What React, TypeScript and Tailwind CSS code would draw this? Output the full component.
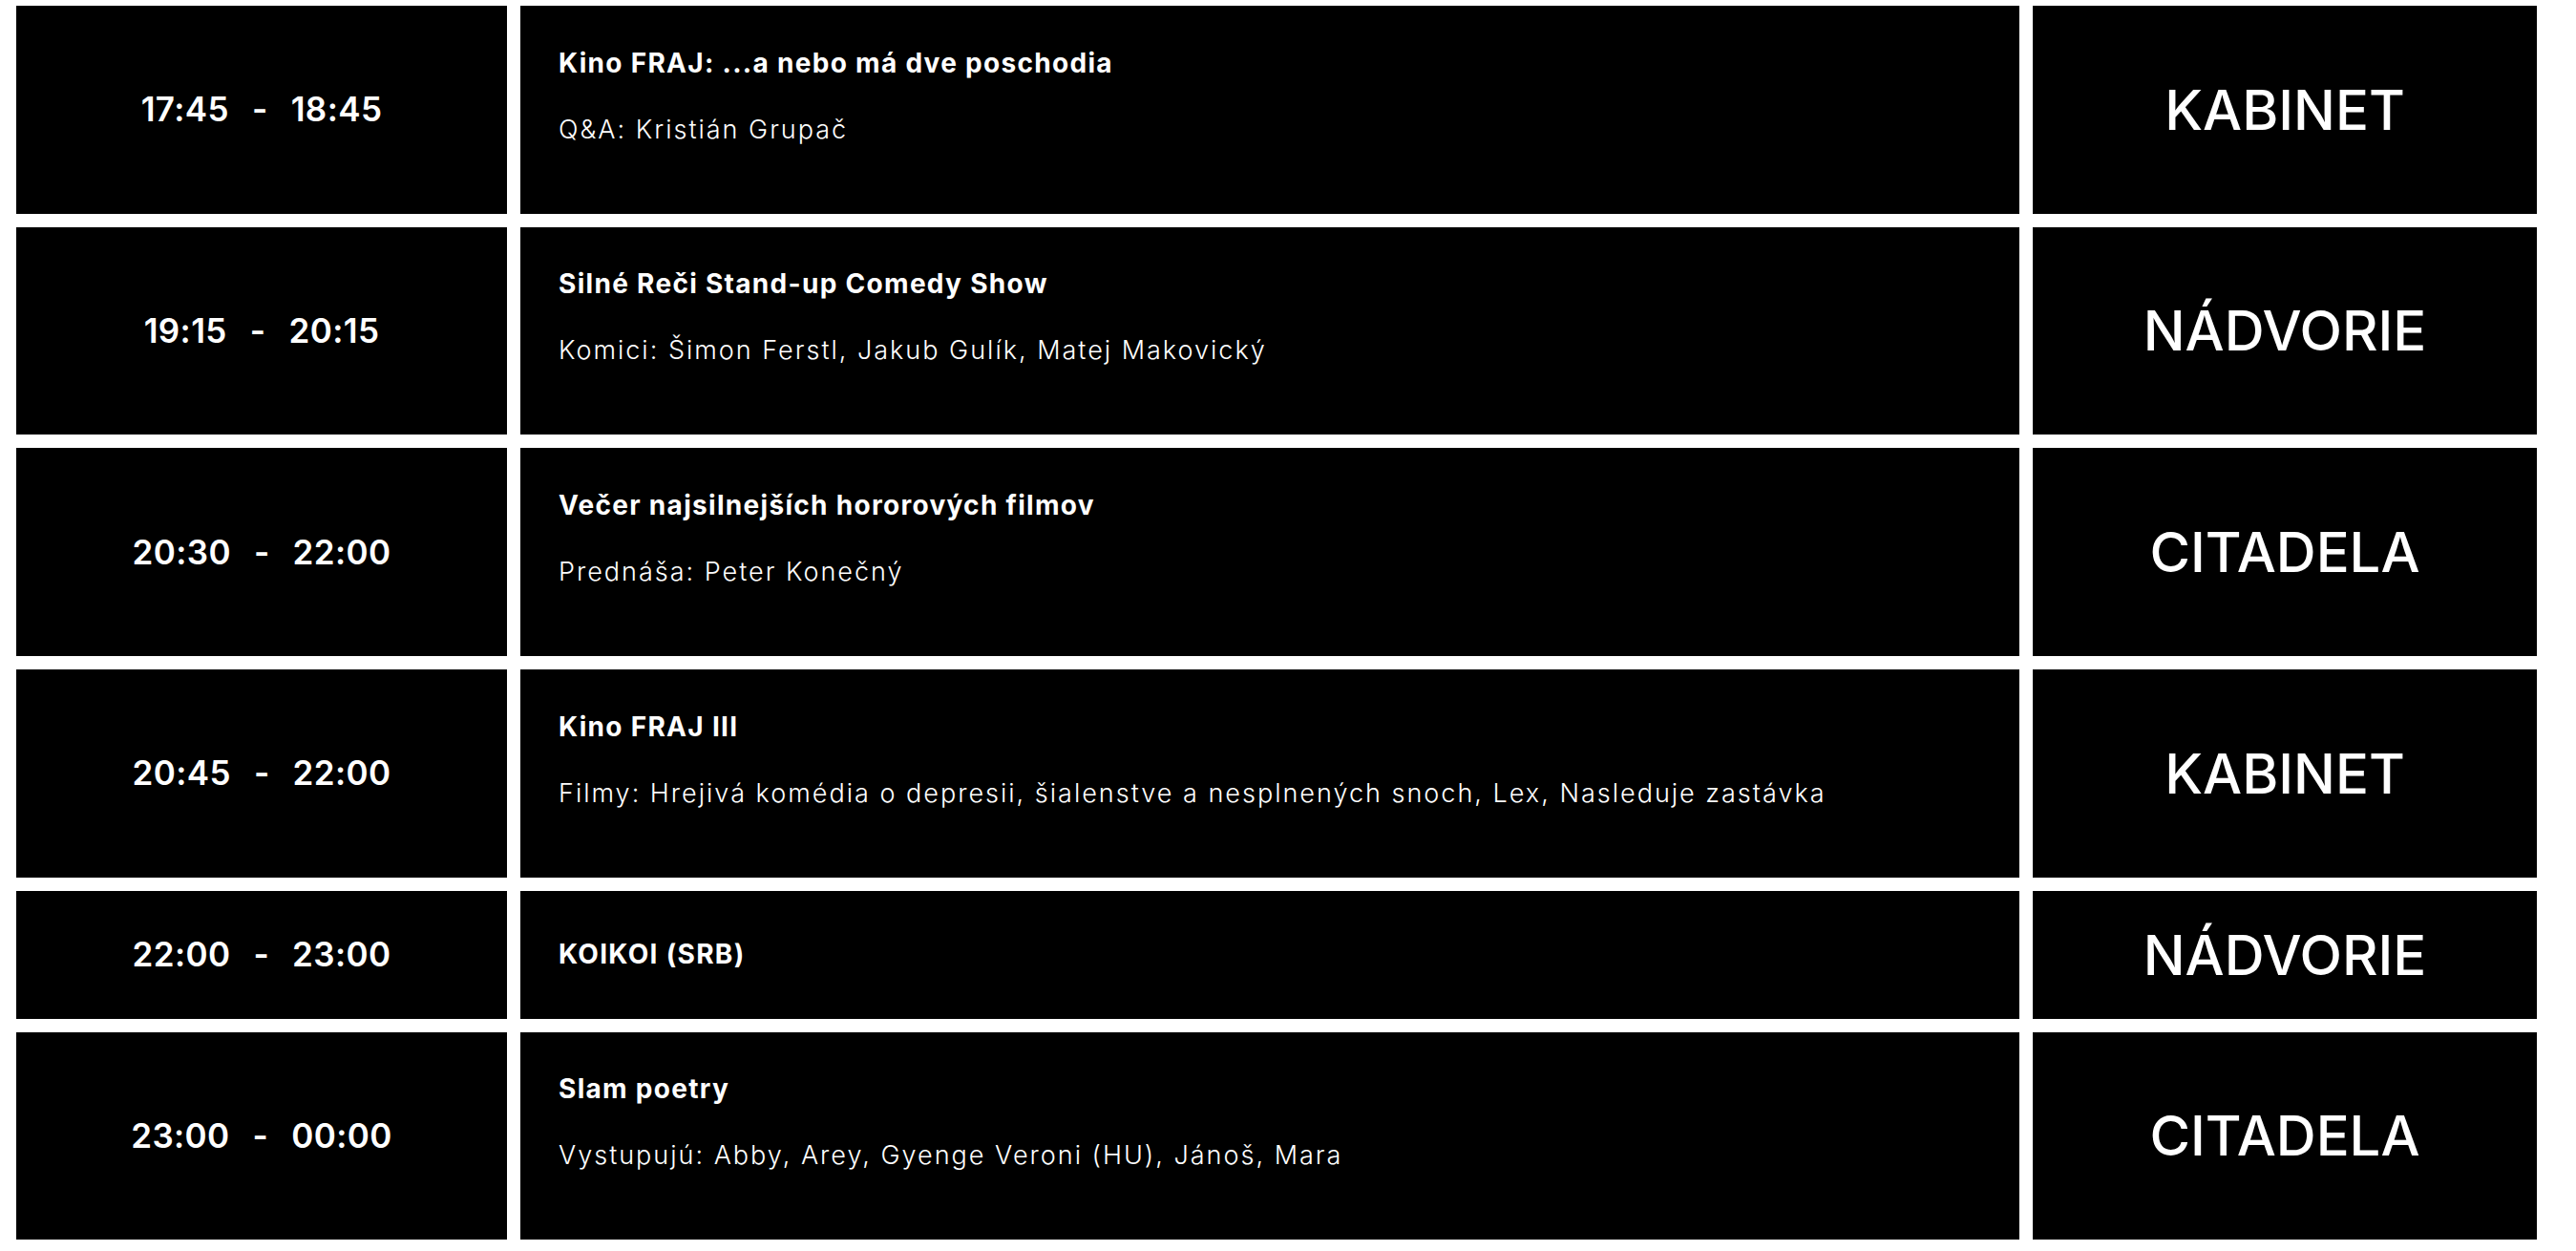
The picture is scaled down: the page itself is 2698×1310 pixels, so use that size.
import React from "react";

type Item = {
  from: string;
  to: string;
  title: string;
  sub?: string;
  place: string;
};

const items: Item[] = [
  { from: "17:45", to: "18:45", title: "Kino FRAJ: ...a nebo má dve poschodia", sub: "Q&A: Kristián Grupač", place: "KABINET" },
  { from: "19:15", to: "20:15", title: "Silné Reči Stand-up Comedy Show", sub: "Komici: Šimon Ferstl, Jakub Gulík, Matej Makovický", place: "NÁDVORIE" },
  { from: "20:30", to: "22:00", title: "Večer najsilnejších hororových filmov", sub: "Prednáša: Peter Konečný", place: "CITADELA" },
  { from: "20:45", to: "22:00", title: "Kino FRAJ III", sub: "Filmy: Hrejivá komédia o depresii, šialenstve a nesplnených snoch, Lex, Nasleduje zastávka", place: "KABINET" },
  { from: "22:00", to: "23:00", title: "KOIKOI (SRB)", place: "NÁDVORIE" },
  { from: "23:00", to: "00:00", title: "Slam poetry", sub: "Vystupujú: Abby, Arey, Gyenge Veroni (HU), Jánoš, Mara", place: "CITADELA" },
];

function Row({ it }: { it: Item }) {
  const tall = !!it.sub;
  return (
    <div
      className={
        "grid grid-cols-[514px_1570px_528px] gap-[14px] " +
        (tall ? "h-[217.67px]" : "h-[134px]")
      }
    >
      <div className="bg-black flex items-center justify-center text-white font-semibold text-[35px] leading-none tracking-[0.4px]">
        <span>{it.from}</span>
        <span className="mx-[24px]">-</span>
        <span>{it.to}</span>
      </div>
      <div className="bg-black flex flex-col justify-center pl-[40px] pr-[40px] text-white">
        <div className="text-[28px] leading-[39px] font-bold tracking-[1.3px]">{it.title}</div>
        {it.sub && (
          <div className="mt-[33px] mb-[30px] text-[27px] leading-[34px] font-light tracking-[2px]">{it.sub}</div>
        )}
      </div>
      <div className="bg-black flex items-center justify-center text-white text-[58px] leading-none font-medium">
        {it.place}
      </div>
    </div>
  );
}

export default function App() {
  return (
    <div
      className="min-h-[1310px] bg-white pt-[6px] pl-[17px] pr-[41px] flex flex-col gap-[14px]"
      style={{ fontFamily: "Inter, 'Noto Sans', sans-serif" }}
    >
      {items.map((it, i) => (
        <Row key={i} it={it} />
      ))}
    </div>
  );
}
